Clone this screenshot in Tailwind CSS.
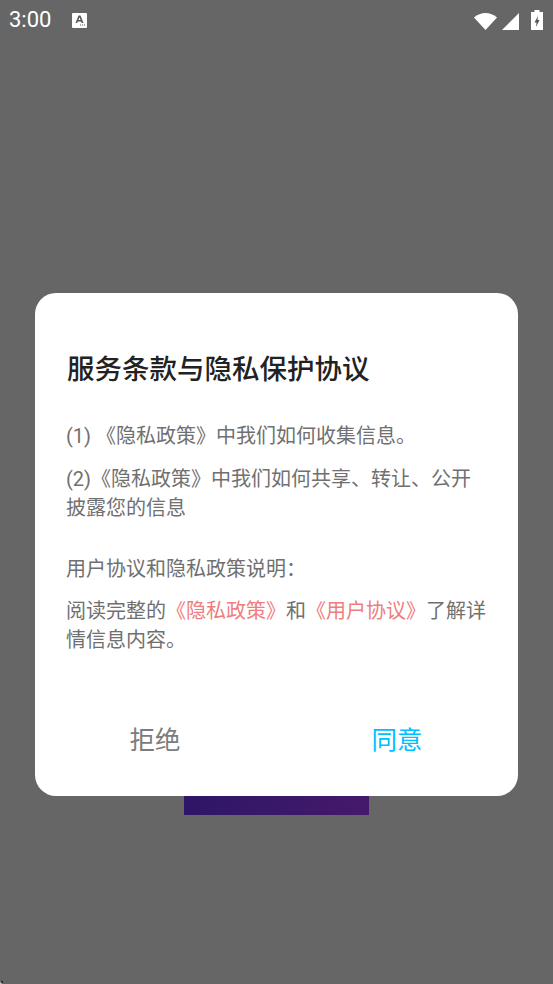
<!DOCTYPE html>
<html lang="zh">
<head>
    <meta charset="UTF-8">
    <meta name="viewport" content="width=device-width, initial-scale=1.0">
    <title>服务条款与隐私保护协议</title>
    <script src="https://cdn.jsdelivr.net/npm/@tailwindcss/browser@4"></script>
</head>
<body class="relative bg-[#666666] h-[984px] overflow-hidden font-['Roboto','Noto_Sans_CJK_SC',sans-serif]">
    <!-- Status bar -->
    <div class="h-[40px] flex items-center justify-between pl-[9px] pr-[10px] text-white">
        <div class="flex items-center gap-[21px]">
            <span class="text-[22px] leading-none">3:00</span>
            <svg width="15" height="15" viewBox="0 0 15 15">
                <rect width="15" height="15" rx="1" fill="#fff"/>
                <path d="M6.5 2.5 H8.5 L11.5 10 H9.8 L9.2 8.4 H5.8 L5.2 10 H3.5 Z M6.4 6.9 H8.6 L7.5 4.2 Z" fill="#555" fill-rule="evenodd"/>
                <rect x="8" y="11.5" width="1" height="1" fill="#555"/>
                <rect x="10" y="11.5" width="1" height="1" fill="#555"/>
                <rect x="12" y="11.5" width="1" height="1" fill="#555"/>
            </svg>
        </div>
        <div class="flex items-start gap-[5px]">
            <svg class="mt-[3px]" width="23" height="17" viewBox="0 0 23 17"><path d="M0 4.5 C6.5 -1.5 16.5 -1.5 23 4.5 L11.5 17 Z" fill="#fff"/></svg>
            <svg class="mt-[3px]" width="17" height="17" viewBox="0 0 17 17"><path d="M0 17 L17 0 V17 Z" fill="#fff"/></svg>
            <svg class="ml-[7px]" width="12" height="20" viewBox="0 0 12 20">
                <path d="M3.5 0 H8.5 V2 H12 V20 H0 V2 H3.5 Z" fill="#fff"/>
                <path d="M7 6 L3.5 12.5 H5.5 L5 17 L8.5 10 H6.5 Z" fill="#555"/>
            </svg>
        </div>
    </div>

    <!-- Dialog -->
    <div class="mt-[253px] mx-[35px] w-[483px] h-[503px] bg-white rounded-[21px] pt-[58px] pl-[31px] pr-[30px] flex flex-col">
        <h1 class="ml-[1px] text-[27.5px] leading-[38px] font-medium text-[#222222] whitespace-nowrap">服务条款与隐私保护协议</h1>
        <div class="mt-[33px] text-[20px] leading-[29px] text-[#707070]">
            <p>(1) 《隐私政策》中我们如何收集信息。</p>
            <p class="mt-[14px]">(2)《隐私政策》中我们如何共享、转让、公开披露您的信息</p>
            <p class="mt-[32px]">用户协议和隐私政策说明：</p>
            <p class="mt-[13px]">阅读完整的<span class="text-[#ef7d7d]">《隐私政策》</span>和<span class="text-[#ef7d7d]">《用户协议》</span>了解详情信息内容。</p>
        </div>
        <div class="mt-[67px] -ml-[31px] -mr-[30px] flex text-[25.5px] leading-[36px]">
            <button class="w-[241px] text-center pr-[1px] text-[#7c7c7c]">拒绝</button>
            <button class="w-[242px] text-center text-[#00bfff]">同意</button>
        </div>
    </div>

    <!-- Page behind the dialog -->
    <div class="w-[185px] h-[19px] ml-[184px] bg-gradient-to-r from-[#2e1566] to-[#45196b]"></div>

    <!-- Corner speck in the capture -->
    <div class="absolute left-0 bottom-0 w-[3px] h-[3px] bg-gradient-to-tr from-white to-black"></div>
</body>
</html>
